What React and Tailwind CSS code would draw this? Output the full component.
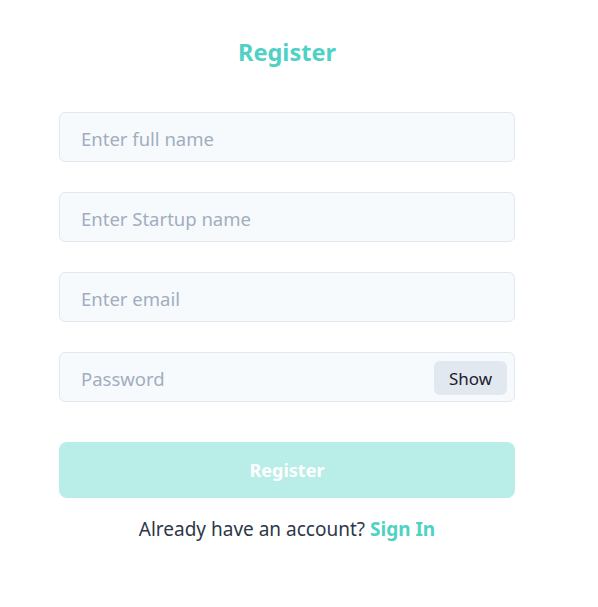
export default function App() {
  const font = { fontFamily: '"Noto Sans", "Open Sans", sans-serif' };
  const inputCls =
    "w-full h-[50px] rounded-md border border-[#e2e8f0] bg-[#f7fafc] px-[21px] pt-[3px] text-[18.5px] text-[#2d3748] placeholder-[#a0aec0] outline-none";
  return (
    <div className="min-h-[607px] bg-white" style={font}>
      <div className="ml-[59px] w-[456px] pt-[34px] flex flex-col">
        <h1 className="text-center text-[23.5px] font-bold text-[#4fd1c5] leading-[36px]">Register</h1>
        <div className="mt-[42px] flex flex-col gap-[30px]">
          <input className={inputCls} placeholder="Enter full name" />
          <input className={inputCls} placeholder="Enter Startup name" />
          <input className={inputCls} placeholder="Enter email" />
          <div className="relative">
            <input className={inputCls} type="password" placeholder="Password" />
            <button className="absolute right-[8px] top-[9px] h-[34px] w-[73px] rounded-md bg-[#e2e8f0] pt-[2px] text-[17px] text-[#1a202c]">
              Show
            </button>
          </div>
        </div>
        <button className="mt-[40px] h-[56px] w-full rounded-lg bg-[#b8ede8] text-[18px] font-bold text-white">
          Register
        </button>
        <p className="mt-[18px] text-center text-[19px] text-[#2d3748] leading-[26px]">
          Already have an account? <span className="font-bold text-[#4fd1c5]">Sign In</span>
        </p>
      </div>
    </div>
  );
}
